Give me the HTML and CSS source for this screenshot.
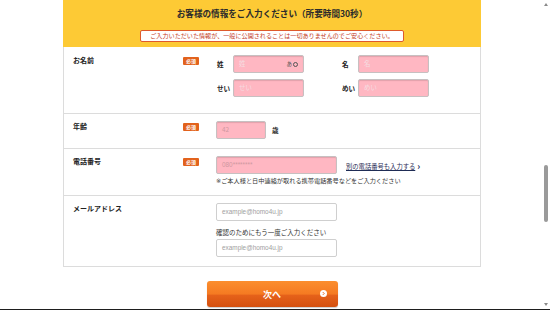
FILE: index.html
```html
<!DOCTYPE html>
<html lang="ja">
<head>
    <meta charset="UTF-8">
    <title>お客様の情報</title>
    <link rel="stylesheet" href="styles.css">
</head>
<body>
<div class="page">
    <main class="main">
        <section class="form">
            <header class="form-head">
                <h1 class="title">お客様の情報をご入力ください（所要時間30秒）</h1>
                <p class="notice">ご入力いただいた情報が、一般に公開されることは一切ありませんのでご安心ください。</p>
            </header>

            <div class="row row-name">
                <div class="label">お名前</div>
                <div class="req"><span class="badge">必須</span></div>
                <div class="field name-grid">
                    <span class="sub">姓</span>
                    <div class="input pink"><span>姓</span><span class="ime">あ<i class="ime-dot"></i></span></div>
                    <span class="sub sub-right">名</span>
                    <div class="input pink"><span>名</span></div>
                    <span class="sub">せい</span>
                    <div class="input pink"><span>せい</span></div>
                    <span class="sub sub-right">めい</span>
                    <div class="input pink"><span>めい</span></div>
                </div>
            </div>

            <div class="row">
                <div class="label">年齢</div>
                <div class="req"><span class="badge">必須</span></div>
                <div class="field inline">
                    <div class="input pink age"><span>42</span></div>
                    <span class="unit">歳</span>
                </div>
            </div>

            <div class="row">
                <div class="label">電話番号</div>
                <div class="req"><span class="badge">必須</span></div>
                <div class="field">
                    <div class="inline">
                        <div class="input pink wide"><span class="latin">080********</span></div>
                        <a class="more" href="#"><span class="more-text">別の電話番号も入力する</span><span class="more-arrow">›</span></a>
                    </div>
                    <p class="note"><span class="mark">※</span>ご本人様と日中連絡が取れる携帯電話番号などをご入力ください</p>
                </div>
            </div>

            <div class="row row-last">
                <div class="label">メールアドレス</div>
                <div class="req"></div>
                <div class="field">
                    <div class="input plain wide"><span class="latin">example@homo4u.jp</span></div>
                    <p class="confirm">確認のためにもう一度ご入力ください</p>
                    <div class="input plain wide"><span class="latin">example@homo4u.jp</span></div>
                </div>
            </div>
        </section>

        <div class="actions">
            <button class="next" type="button">
                次へ
                <span class="next-icon">
                    <svg width="7" height="7" viewBox="0 0 10 10">
                        <circle cx="5" cy="5" r="5" fill="#fff"/>
                        <path d="M4 3 L6 5 L4 7" fill="none" stroke="#e8661a" stroke-width="1.4"/>
                    </svg>
                </span>
            </button>
        </div>
    </main>

    <div class="scrollbar">
        <span class="arrow up"></span>
        <span class="thumb"></span>
        <span class="arrow down"></span>
    </div>
</div>
</body>
</html>
```

FILE: styles.css
```css
* {
    box-sizing: border-box;
}

body {
    margin: 0;
    background: #fff;
    font-family: "Noto Sans CJK JP", sans-serif;
    color: #333;
}

.page {
    display: flex;
    height: 310px;
    border-bottom: 1px solid #1e1e1e;
    overflow: hidden;
}

.main {
    width: 540px;
}

.form {
    width: 418px;
    margin-left: 63px;
    border: 1px solid #dcdcdc;
    border-top: 0;
}

.form-head {
    height: 47px;
    margin: 0 -1px;
    background: #fdca35;
    padding-top: 8px;
    text-align: center;
}

.title {
    margin: 0;
    font-size: 8.6px;
    line-height: 11px;
    font-weight: 700;
    color: #2b2b2b;
}

.notice {
    display: inline-block;
    margin: 8px 0 0;
    width: 264px;
    height: 12px;
    background: #fff;
    border: 1px solid #de5a2c;
    border-radius: 2px;
    font-size: 6.1px;
    line-height: 10px;
    color: #c23a1c;
    white-space: nowrap;
}

.row {
    display: grid;
    grid-template-columns: 119px 33px 1fr;
    align-items: start;
    padding: 7px 0 9px;
    border-bottom: 1px solid #dcdcdc;
    font-size: 7px;
    line-height: 10px;
}

.row-name {
    padding: 8px 0 16px;
}

.row-last {
    border-bottom: 0;
}

.label {
    padding-left: 9px;
    font-weight: 700;
    color: #222;
}

.req {
    display: flex;
    padding-top: 2px;
}

.badge {
    width: 16px;
    height: 8px;
    background: #e2621c;
    border-radius: 1px;
    color: #fff;
    font-size: 5px;
    line-height: 8px;
    text-align: center;
    font-weight: 700;
}

.name-grid {
    display: grid;
    grid-template-columns: 17px 71px 54px 71px;
    grid-auto-rows: 18px;
    row-gap: 6px;
    align-items: center;
}

.sub {
    font-size: 6.6px;
    font-weight: 700;
    color: #222;
    padding-left: 1px;
}

.sub-right {
    padding-left: 38px;
}

.input {
    display: flex;
    align-items: center;
    justify-content: space-between;
    height: 18px;
    padding: 0 5px;
    border: 1px solid #c7c0c1;
    border-radius: 2px;
    font-size: 6.4px;
}

.pink {
    background: #ffb7c2;
    color: #f5dde1;
    box-shadow: inset 0 1px 1px rgba(0, 0, 0, 0.12);
}

.age, .wide {
    color: #cf98a1;
}

.plain {
    background: #fff;
    color: #a0a0a0;
    border-color: #cfcfcf;
}

.latin {
    font-family: "Liberation Sans", sans-serif;
}

.ime {
    display: flex;
    align-items: center;
    gap: 1px;
    color: #555;
    font-size: 5.5px;
}

.ime-dot {
    width: 5px;
    height: 5px;
    border: 1.2px solid #555;
    border-radius: 50%;
}

.inline {
    display: flex;
    align-items: center;
}

.age {
    width: 50px;
}

.unit {
    margin-left: 6px;
    font-size: 6.6px;
    font-weight: 700;
    color: #222;
}

.wide {
    width: 121px;
}

.more {
    display: flex;
    align-items: center;
    gap: 2px;
    margin-left: 9px;
    padding-top: 4px;
    font-size: 6.3px;
    color: #1f2c55;
    text-decoration: none;
}

.more-text {
    text-decoration: underline;
}

.more-arrow {
    font-size: 9px;
    font-weight: 700;
    line-height: 8px;
}

.note {
    margin: 2px 0 0;
    font-size: 6.2px;
    line-height: 10px;
    color: #333;
    white-space: nowrap;
}

.mark {
    font-family: "DejaVu Sans", sans-serif;
    font-variant-emoji: text;
    color: #333;
}

.confirm {
    margin: 6px 0 2px;
    font-size: 6.5px;
    line-height: 10px;
    color: #333;
}

.actions {
    display: flex;
    justify-content: center;
    padding: 14px 0 0 4px;
}

.next {
    position: relative;
    display: flex;
    align-items: center;
    justify-content: center;
    width: 131px;
    height: 26px;
    border: 0;
    border-radius: 3px;
    background: linear-gradient(#fb8e2e 0%, #f57a22 50%, #e5611a 55%, #d4500f 100%);
    color: #fff;
    font-family: "Noto Sans CJK JP", sans-serif;
    font-size: 9px;
    font-weight: 700;
    box-shadow: 0 1px 1px rgba(0, 0, 0, 0.2);
}

.next-icon {
    position: absolute;
    right: 11px;
    top: 9px;
    display: flex;
}

.scrollbar {
    display: flex;
    flex-direction: column;
    align-items: center;
    width: 10px;
    padding: 3px 0 0 1px;
}

.arrow {
    width: 0;
    height: 0;
    border-left: 2px solid transparent;
    border-right: 2px solid transparent;
}

.up {
    border-bottom: 3px solid #8a8a8a;
}

.down {
    margin-top: auto;
    margin-bottom: 3px;
    border-top: 3px solid #8a8a8a;
}

.thumb {
    width: 4px;
    height: 57px;
    margin-top: 159px;
    background: #9a9a9a;
    border-radius: 2px;
}
```
